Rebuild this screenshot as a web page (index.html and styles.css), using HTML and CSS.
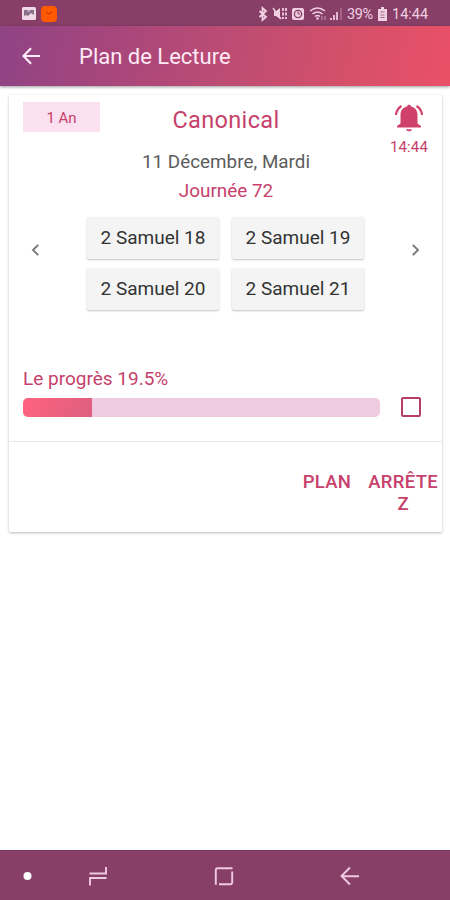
FILE: index.html
```html
<!DOCTYPE html>
<html lang="fr">
<head>
<meta charset="utf-8">
<title>Plan de Lecture</title>
<link rel="stylesheet" href="styles.css">
</head>
<body>
<div class="status">
  <svg class="pic" width="14" height="14" viewBox="0 0 14 14"><rect width="14" height="13" rx="1.5" fill="#f1d8e8"/><path d="M2 3h10v5L9 6 6 9 4 8 2 9z" fill="#87718a"/><path d="M5 4l3-1-1 2z" fill="#f1d8e8"/></svg>
  <span class="app"><svg width="16" height="16" viewBox="0 0 16 16"><path d="M5 6l3 2 3-2" fill="none" stroke="#cf3c00" stroke-width="1.2"/></svg></span>
  <svg class="icons" width="86" height="16" viewBox="258 0 86 16" fill="none" stroke="#f0cfe2">
    <path d="M259.500 5l6.500 6-3.500 3V2l3.500 3-6.500 6" stroke-width="1.800"/>
    <path d="M274 5h2l4-3v11l-4-3h-2z" fill="#f0cfe2" stroke="none"/><path d="M273 2l8 11" stroke-width="1.300"/><path d="M283 2v11M286 2v11" stroke-width="1.800" stroke-dasharray="3 1.500"/>
    <rect x="292" y="2" width="12" height="12" rx="2" fill="#f0cfe2" stroke="none"/><circle cx="298" cy="8" r="3.600" stroke="#873f67" stroke-width="1.300"/><path d="M298 5.500V8h2" stroke="#873f67"/>
    <path d="M310 5q7.500-6 15 0M312.500 8q5-4 10 0M315 10.500q2.500-2 5 0" stroke-width="1.600"/><circle cx="317.500" cy="12.500" r="1.200" fill="#f0cfe2" stroke="none"/><path d="M322 14v-4M325 10v4" stroke-width="1" opacity=".6"/>
    <path d="M331 14v-2M334 14v-5M337 14V6" stroke-width="1.700"/><path d="M341 14V2" stroke-width="1.500" opacity=".35"/>
  </svg>
  <span class="pct">39%</span>
  <svg class="batt" width="9" height="14" viewBox="0 0 9 14"><path d="M3 0h3v2h3v12H0V2h3z" fill="#f0cfe2"/><path d="M2.500 5h4M2.500 8h4M2.500 10.500h4" stroke="#a76c8c" stroke-width="1.200"/></svg>
  <span class="clock">14:44</span>
</div>
<header class="bar">
  <svg width="20" height="18" viewBox="0 0 20 18" fill="none" stroke="#ffeaf6" stroke-width="2.200"><path d="M10 1.200L2.500 9l7.500 7.800M2.500 9H19"/></svg>
  <h1>Plan de Lecture</h1>
</header>
<main>
  <section class="card">
    <div class="top">
      <span class="tag">1 An</span>
      <div class="heading">
        <h2>Canonical</h2>
        <p class="date">11 Décembre, Mardi</p>
        <p class="day">Journée 72</p>
      </div>
      <div class="alarm">
        <svg width="30" height="28" viewBox="0 0 30 28"><path d="M13 2.500C13 .3 17 .3 17 2.500c4.500 1.200 6.500 4.200 6.500 8.500v8.500L27 22v1.500H3V22l3.500-2.500V11c0-4.300 2-7.300 6.500-8.500z" fill="#cf416b"/><path d="M12 25.200h6c-.5 2.800-5.500 2.800-6 0z" fill="#cf416b"/><path d="M7.500 2Q2.500 5 2 11M22.500 2q5 3 5.500 9" fill="none" stroke="#cf416b" stroke-width="2.200"/></svg>
        <span>14:44</span>
      </div>
    </div>
    <div class="chapters">
      <svg width="9" height="14" viewBox="0 0 9 14"><path d="M7.200 1.800L2 7l5.200 5.200" fill="none" stroke="#777" stroke-width="1.900"/></svg>
      <div class="grid"><span>2 Samuel 18</span><span>2 Samuel 19</span><span>2 Samuel 20</span><span>2 Samuel 21</span></div>
      <svg width="9" height="14" viewBox="0 0 9 14"><path d="M1.800 1.800L7 7l-5.200 5.200" fill="none" stroke="#777" stroke-width="1.900"/></svg>
    </div>
    <div class="progress">
      <p>Le progrès 19.5%</p>
      <div class="line"><div class="track"><div class="fill"></div></div><span class="check"></span></div>
    </div>
    <div class="actions"><span class="plan">PLAN</span><span class="stop">ARRÊTE<br>Z</span></div>
  </section>
</main>
<nav>
  <svg width="450" height="49" viewBox="0 1 450 49" fill="none" stroke="#f0cae0" stroke-width="1.900">
    <circle cx="27.500" cy="26" r="4" fill="#fff" stroke="none"/>
    <path d="M89.500 23.500H106V17M106.500 28H90v7.500"/>
    <path d="M223 18.200h-5.200q-2 0-2 2v14.500M223 18.200h9.500M219 34.200h11.200q2 0 2-2V21.500"/>
    <path d="M350 17.500l-8.500 8.500 8.500 8.500M342 26.200h17"/>
  </svg>
</nav>
</body>
</html>
```
FILE: styles.css
```css
* { box-sizing: border-box; }
body {
  margin: 0;
  width: 450px;
  height: 900px;
  display: flex;
  flex-direction: column;
  background: #fff;
  font-family: Roboto, sans-serif;
  overflow: hidden;
}
h1, h2, p { margin: 0; font-weight: 400; white-space: nowrap; }
svg { display: block; flex: none; }

.status {
  height: 26px;
  padding: 2px 22px 0 22px;
  display: flex;
  align-items: center;
  background: #873f67;
  color: #f0cfe2;
  font-size: 14.5px;
}
.app {
  width: 16px;
  height: 16px;
  margin-left: 5px;
  margin-top: -1px;
  border-radius: 4px;
  background: #ff5a00;
}
.icons { margin-left: auto; margin-top: -1px; }
.pct { width: 27px; margin-left: 3px; letter-spacing: -.4px; }
.batt { margin: -1px 5px 0 4px; }
.clock { width: 36px; }

.bar {
  height: 60px;
  padding-left: 21px;
  display: flex;
  align-items: center;
  gap: 38px;
  background: linear-gradient(100deg, #8f4385 0%, #a6467c 24%, #c04d72 55%, #d65069 78%, #ea5068 100%);
  box-shadow: 0 1px 3px rgba(0, 0, 0, .4);
}
.bar h1 { color: #ffeaf6; font-size: 22px; line-height: 28px; margin-top: 1px; }

main { flex: 1; padding: 9px 8px 0 9px; }
.card {
  height: 437px;
  border-radius: 2px;
  box-shadow: 0 1px 3px rgba(0, 0, 0, .28);
  display: flex;
  flex-direction: column;
}
.top {
  height: 122px;
  padding: 7px 13px 0 14px;
  display: grid;
  grid-template-columns: 77px 1fr 40px;
  color: #c6416b;
}
.tag {
  height: 30px;
  background: #fbe0ef;
  text-align: center;
  font-size: 15px;
  line-height: 32px;
}
.heading { text-align: center; padding-right: 37px; }
.heading h2 { font-size: 23.5px; line-height: 36px; letter-spacing: .35px; }
.date { color: #5c5c5c; font-size: 18.800px; line-height: 26px; margin-top: 11px; letter-spacing: .05px; }
.day { font-size: 18.900px; line-height: 26px; margin-top: 3px; }
.alarm {
  display: flex;
  flex-direction: column;
  align-items: center;
  padding-top: 2px;
  font-size: 15px;
  line-height: 18px;
  letter-spacing: .1px;
}
.alarm span { margin-top: 6px; }

.chapters {
  height: 93px;
  padding: 0 22px;
  display: flex;
  justify-content: space-between;
}
.chapters > svg { margin-top: 26px; }
.grid { display: grid; grid-template-columns: 132px 132px; grid-auto-rows: 42px; gap: 9px 13px; }
.grid span {
  background: #f4f4f4;
  border-radius: 2px;
  box-shadow: 0 1px 2px rgba(0, 0, 0, .24);
  color: #333;
  font-size: 19px;
  line-height: 41px;
  text-align: center;
  white-space: nowrap;
}

.progress { height: 132px; padding: 55px 21px 0 14px; border-bottom: 1px solid #e9e9e9; }
.progress p { color: #c6416b; font-size: 19px; line-height: 28px; }
.line { display: flex; justify-content: space-between; align-items: center; margin-top: 4px; }
.track { width: 357px; height: 19px; border-radius: 5px; overflow: hidden; background: #efcbe2; }
.fill { width: 19.2%; height: 100%; background: linear-gradient(115deg, #ff6380, #dc607e); }
.check { width: 20px; height: 20px; border: 2px solid #b43e66; border-radius: 2px; }

.actions {
  padding: 29px 4px 0 0;
  display: flex;
  justify-content: flex-end;
  gap: 17px;
  color: #c6416b;
  font-size: 18.500px;
  font-weight: 500;
  line-height: 22px;
  letter-spacing: .3px;
  text-align: center;
}
nav { height: 50px; background: #873f67; border-top: 1px solid #70385a; }
```
